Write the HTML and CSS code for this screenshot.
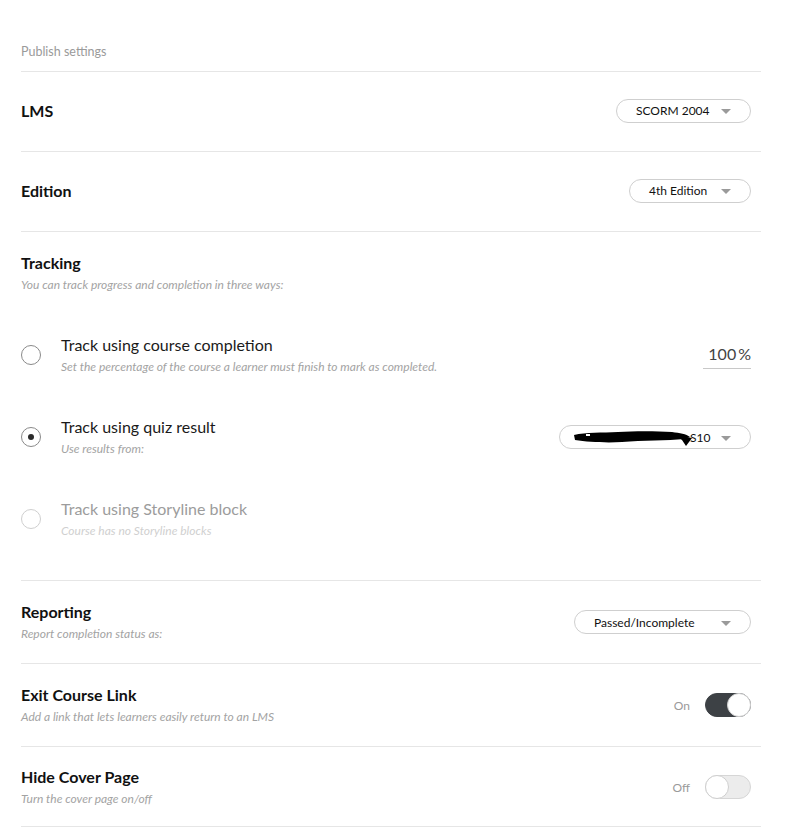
FILE: index.html
```html
<!DOCTYPE html>
<html lang="en">

<head>
    <title>Publish settings</title>
    <link rel="stylesheet" href="styles.css">
</head>

<body>
    <div class="settings">
        <div class="settings-header">Publish settings</div>

        <div class="setting setting--single">
            <div class="setting-text">
                <div class="setting-title">LMS</div>
            </div>
            <div class="select select--lms">
                <span>SCORM 2004</span>
                <span class="caret"></span>
            </div>
        </div>

        <div class="setting setting--single">
            <div class="setting-text">
                <div class="setting-title">Edition</div>
            </div>
            <div class="select select--edition">
                <span>4th Edition</span>
                <span class="caret"></span>
            </div>
        </div>

        <div class="tracking">
            <div class="setting-title">Tracking</div>
            <div class="setting-sub">You can track progress and completion in three ways:</div>

            <div class="options">
                <div class="option">
                    <span class="radio"></span>
                    <div class="option-text">
                        <div class="option-title">Track using course completion</div>
                        <div class="setting-sub">Set the percentage of the course a learner must finish to mark as completed.</div>
                    </div>
                    <div class="percent">100<span class="percent-sign">%</span></div>
                </div>

                <div class="option">
                    <span class="radio radio--checked"></span>
                    <div class="option-text">
                        <div class="option-title">Track using quiz result</div>
                        <div class="setting-sub">Use results from:</div>
                    </div>
                    <div class="select select--quiz">
                        <span class="quiz-name">
                            <svg class="redact" width="120" height="18" viewBox="0 0 120 18">
                                <path d="M2 7 C14 4 30 5 46 4 C62 3 84 3 100 4 C108 5 114 6 118 9 L112 11 C96 13 70 12 50 14 C34 15 16 14 3 12 Z" fill="#000"/>
                                <path d="M104 7 L120 10 L114 18 L110 12 Z" fill="#000"/>
                                <rect x="14" y="6" width="4" height="2" fill="#fff"/>
                            </svg>S10</span>
                        <span class="caret"></span>
                    </div>
                </div>

                <div class="option option--disabled">
                    <span class="radio"></span>
                    <div class="option-text">
                        <div class="option-title">Track using Storyline block</div>
                        <div class="setting-sub">Course has no Storyline blocks</div>
                    </div>
                </div>
            </div>
        </div>

        <div class="setting">
            <div class="setting-text">
                <div class="setting-title">Reporting</div>
                <div class="setting-sub">Report completion status as:</div>
            </div>
            <div class="select select--report">
                <span>Passed/Incomplete</span>
                <span class="caret"></span>
            </div>
        </div>

        <div class="setting">
            <div class="setting-text">
                <div class="setting-title">Exit Course Link</div>
                <div class="setting-sub">Add a link that lets learners easily return to an LMS</div>
            </div>
            <div class="switch-wrap">
                <span class="switch-label">On</span>
                <span class="switch switch--on"><span class="knob"></span></span>
            </div>
        </div>

        <div class="setting setting--last">
            <div class="setting-text">
                <div class="setting-title">Hide Cover Page</div>
                <div class="setting-sub">Turn the cover page on/off</div>
            </div>
            <div class="switch-wrap">
                <span class="switch-label">Off</span>
                <span class="switch"><span class="knob"></span></span>
            </div>
        </div>
    </div>
</body>

</html>
```

FILE: styles.css
```css
body {
    margin: 0;
    background: #fff;
    font-family: Lato, "Open Sans", "Liberation Sans", sans-serif;
    color: #111;
}

.settings {
    width: 740px;
    margin-left: 21px;
}

.settings-header {
    padding-top: 43px;
    padding-bottom: 10px;
    line-height: 18px;
    font-size: 12.5px;
    color: #9a9a9a;
    border-bottom: 1px solid #e6e6e6;
}

.setting {
    display: flex;
    align-items: center;
    justify-content: space-between;
    padding: 21px 10px 21px 0;
    border-bottom: 1px solid #e6e6e6;
}

.setting--single {
    padding: 0 10px 2px 0;
    height: 77px;
}

.setting--last {
    padding-top: 20px;
    padding-bottom: 19px;
}

.setting-title {
    font-size: 16px;
    font-weight: 700;
    line-height: 20px;
    color: #111;
}

.setting-sub {
    margin-top: 4px;
    font-size: 12px;
    font-style: italic;
    line-height: 16px;
    color: #a3a3a3;
}

.tracking {
    padding: 21px 10px 41px 0;
    border-bottom: 1px solid #e6e6e6;
}

.options {
    display: flex;
    flex-direction: column;
    gap: 42px;
    margin-top: 42px;
}

.option {
    display: flex;
    align-items: center;
}

.option-text {
    flex: 1;
    margin-left: 20px;
}

.option-title {
    font-size: 16px;
    line-height: 20px;
    color: #1a1a1a;
}

.option--disabled .option-title {
    color: #9c9c9c;
}

.option--disabled .setting-sub {
    color: #d0d0d0;
}

.radio {
    box-sizing: border-box;
    width: 20px;
    height: 20px;
    border: 1px solid #8a8a8a;
    border-radius: 50%;
    display: flex;
    align-items: center;
    justify-content: center;
}

.radio--checked::after {
    content: "";
    width: 6px;
    height: 6px;
    border-radius: 50%;
    background: #2b2b2b;
}

.option--disabled .radio {
    border-color: #cfcfcf;
}

.percent {
    width: 48px;
    text-align: right;
    font-size: 16px;
    line-height: 20px;
    color: #444;
    padding-bottom: 4px;
    border-bottom: 1px solid #c8c8c8;
    margin-top: 2px;
}

.percent-sign {
    margin-left: 2px;
}

.select {
    box-sizing: border-box;
    height: 24px;
    border: 1px solid #cfcfcf;
    border-radius: 12px;
    display: flex;
    align-items: center;
    justify-content: space-between;
    padding: 0 19px 0 19px;
    font-size: 12px;
    color: #111;
}

.select--lms {
    width: 135px;
}

.select--edition {
    width: 122px;
}

.select--quiz {
    width: 192px;
    padding-left: 12px;
}

.select--report {
    width: 177px;
}

.caret {
    width: 0;
    height: 0;
    border-left: 5px solid transparent;
    border-right: 5px solid transparent;
    border-top: 5px solid #9a9a9a;
    margin-top: 2px;
}

.quiz-name {
    display: flex;
    align-items: center;
}

.redact {
    display: block;
    margin-right: -2px;
}

.switch-wrap {
    display: flex;
    align-items: center;
    gap: 15px;
}

.switch-label {
    font-size: 12px;
    color: #9a9a9a;
}

.switch {
    box-sizing: border-box;
    width: 46px;
    height: 24px;
    border-radius: 12px;
    background: #ececec;
    border: 1px solid #d6d6d6;
    display: flex;
    align-items: center;
    justify-content: flex-start;
}

.switch--on {
    background: #3d4145;
    border-color: #3d4145;
    justify-content: flex-end;
}

.knob {
    box-sizing: border-box;
    width: 24px;
    height: 24px;
    margin: -1px;
    border-radius: 50%;
    background: #fff;
    border: 1px solid #cfcfcf;
}
```
